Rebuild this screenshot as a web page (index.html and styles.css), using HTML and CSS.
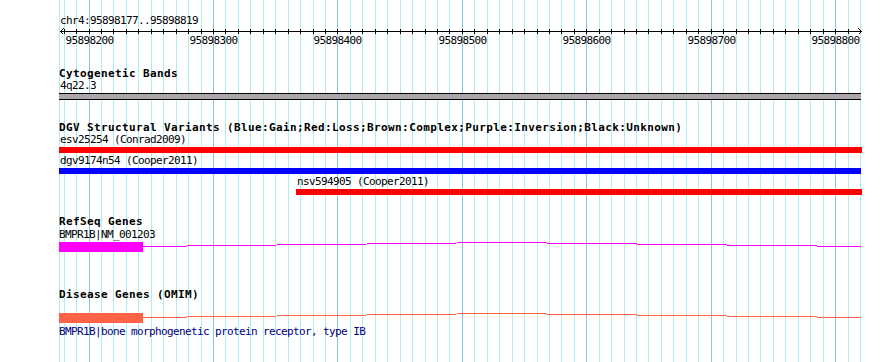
FILE: index.html
```html
<!DOCTYPE html>
<html lang="en">
<head>
    <meta charset="UTF-8">
    <meta name="viewport" content="width=device-width, initial-scale=1.0">
    <title>chr4:95898177..95898819</title>
    <link rel="stylesheet" href="styles.css">
</head>
<body>
    <div class="panel" id="panel" data-start="95898177" data-end="95898819">
        <svg class="grid" id="grid" width="890" height="362"></svg>

        <div class="tracks">
            <div class="ruler">
                <div class="label">chr4:95898177..95898819</div>
                <svg class="axis" id="axis" width="803" height="8"></svg>
                <div class="tick-labels" id="tickLabels"></div>
            </div>

            <div class="track cyto">
                <div class="title">Cytogenetic Bands</div>
                <div class="label">4q22.3</div>
                <div class="band"></div>
            </div>

            <div class="track dgv">
                <div class="title">DGV Structural Variants (Blue:Gain;Red:Loss;Brown:Complex;Purple:Inversion;Black:Unknown)</div>
                <div class="feature loss" style="margin-left: 0; width: 803px;">
                    <div class="label">esv25254 (Conrad2009)</div>
                    <div class="bar"></div>
                </div>
                <div class="feature gain" style="margin-left: 0; width: 802px;">
                    <div class="label">dgv9174n54 (Cooper2011)</div>
                    <div class="bar"></div>
                </div>
                <div class="feature loss" style="margin-left: 237px; width: 566px;">
                    <div class="label">nsv594905 (Cooper2011)</div>
                    <div class="bar"></div>
                </div>
            </div>

            <div class="track refseq">
                <div class="title">RefSeq Genes</div>
                <div class="label">BMPR1B|NM_001203</div>
                <div class="gene">
                    <div class="exon"></div>
                    <svg class="intron" width="718" height="10">
                        <polyline points="0,4.5 359,0.5 718,4.5"></polyline>
                    </svg>
                </div>
            </div>

            <div class="track omim">
                <div class="title">Disease Genes (OMIM)</div>
                <div class="gene">
                    <div class="exon"></div>
                    <svg class="intron" width="718" height="10">
                        <polyline points="0,4.5 359,0.5 718,4.5"></polyline>
                    </svg>
                </div>
                <div class="label desc">BMPR1B|bone morphogenetic protein receptor, type IB</div>
            </div>
        </div>
    </div>

    <script src="script.js"></script>
</body>
</html>
```

FILE: styles.css
```css
body {
    margin: 0;
    background: #fff;
}
.panel {
    position: relative;
    width: 890px;
    height: 362px;
    overflow: hidden;
    background: #fff;
    color: #000;
    font-family: "DejaVu Sans Mono", "Liberation Mono", monospace;
    font-size: 11px;
    letter-spacing: -0.62px;
    line-height: 12px;
}
.grid {
    position: absolute;
    top: 0;
    left: 0;
}
.grid line {
    stroke: #afeeee;
    stroke-width: 1;
    shape-rendering: crispEdges;
}
.grid line.major {
    stroke: #87c6ea;
}
.tracks {
    position: relative;
    width: 803px;
    padding-left: 59px;
}
.label {
    position: relative;
    height: 12px;
    white-space: pre;
}
.title {
    height: 13px;
    line-height: 13px;
    font-size: 11px;
    letter-spacing: 0.38px;
    font-weight: bold;
    white-space: pre;
}

/* ruler */
.ruler .label {
    margin-top: 15px;
    padding-left: 1px;
}
.axis {
    display: block;
}
.axis line, .axis polyline {
    stroke: #000;
    stroke-width: 1;
    fill: none;
    shape-rendering: crispEdges;
}
.tick-labels {
    position: relative;
    height: 12px;
}
.tick-labels span {
    position: absolute;
    top: 0;
    transform: translateX(-50%);
}

/* tracks */
.cyto {
    margin-top: 20px;
}
.cyto .label {
    padding-left: 1px;
}
.band {
    margin-top: 1px;
    width: 802px;
    height: 5px;
    background: #a9a7a9;
    border-top: 1px solid #000;
    border-bottom: 1px solid #000;
}
.dgv {
    margin-top: 21px;
}
.feature + .feature {
    margin-top: 2px;
}
.feature .label {
    padding-left: 1px;
}
.feature .bar {
    margin-top: 1px;
    height: 6px;
}
.loss .bar {
    background: #ff0000;
}
.gain .bar {
    background: #0000ff;
}
.refseq {
    margin-top: 20px;
}
.refseq .label {
    height: 13px;
    line-height: 13px;
}
.refseq .gene {
    margin-top: 1px;
}
.omim {
    margin-top: 36px;
}
.omim .gene {
    margin-top: 12px;
}
.gene {
    display: flex;
    height: 10px;
}
.exon {
    width: 84px;
    height: 10px;
}
.intron {
    display: block;
}
.intron polyline {
    fill: none;
    stroke-width: 1;
    shape-rendering: crispEdges;
}
.refseq .exon {
    background: #ff00ff;
}
.refseq .intron polyline {
    stroke: #ff00ff;
}
.omim .exon {
    background: #ff6347;
}
.omim .intron polyline {
    stroke: #ff6347;
}
.desc {
    margin-top: 3px;
    color: #000080;
}
```

FILE: script.js
```js
const panel = document.getElementById('panel');
const grid = document.getElementById('grid');
const axis = document.getElementById('axis');
const tickLabels = document.getElementById('tickLabels');

const start = parseInt(panel.dataset.start);
const end = parseInt(panel.dataset.end);
const padLeft = 60;
const trackLeft = 59;
const scale = 800 / (end - start + 1);
const NS = 'http://www.w3.org/2000/svg';

function xOf(bp) {
    return Math.round(padLeft + (bp - start) * scale);
}

function addLine(svg, x1, y1, x2, y2, cls) {
    const line = document.createElementNS(NS, 'line');
    line.setAttribute('x1', x1);
    line.setAttribute('y1', y1);
    line.setAttribute('x2', x2);
    line.setAttribute('y2', y2);
    if (cls) line.setAttribute('class', cls);
    svg.appendChild(line);
}

// panel edges
addLine(grid, 59.5, 0, 59.5, 362);
addLine(grid, 860.5, 0, 860.5, 362);

// axis line and arrows
addLine(axis, 1, 4.5, 803, 4.5);
const arrows = [
    '4.5,1.5 1.5,4.5 4.5,7.5',
    '799.5,1.5 802.5,4.5 799.5,7.5'
];
arrows.forEach(points => {
    const p = document.createElementNS(NS, 'polyline');
    p.setAttribute('points', points);
    axis.appendChild(p);
});

for (let bp = Math.ceil(start / 10) * 10; bp <= end; bp += 10) {
    const x = xOf(bp);
    const major = bp % 100 === 0;
    addLine(grid, x + 0.5, 0, x + 0.5, 362, major ? 'major' : '');
    addLine(axis, x - trackLeft + 0.5, 2, x - trackLeft + 0.5, 7);

    if (major) {
        const span = document.createElement('span');
        span.textContent = bp;
        span.style.left = (x - trackLeft + 0.5) + 'px';
        tickLabels.appendChild(span);
    }
}
```
